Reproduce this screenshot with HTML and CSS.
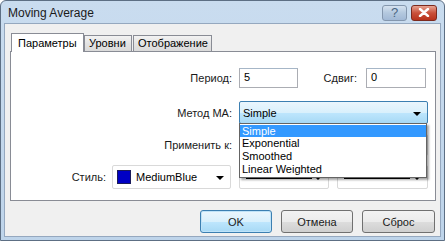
FILE: index.html
```html
<!DOCTYPE html>
<html lang="ru">
<head>
  <meta charset="UTF-8">
  <title>Moving Average</title>
  <link rel="stylesheet" href="styles.css">
</head>
<body>
  <div class="window">
    <div class="titlebar">
      <span class="title">Moving Average</span>
      <div class="caption-btns">
        <span class="cap-btn help">?</span>
        <span class="cap-btn close">
          <svg width="12" height="9" viewBox="0 0 12 9"><path d="M2 1 L10 8 M10 1 L2 8" stroke="#fff" stroke-width="2.4" stroke-linecap="round"/></svg>
        </span>
      </div>
    </div>

    <div class="client">
      <ul class="tabs">
        <li class="tab active">Параметры</li>
        <li class="tab">Уровни</li>
        <li class="tab">Отображение</li>
      </ul>

      <div class="panel">
        <div class="row row-period">
          <label class="lbl lbl-wide">Период:</label>
          <div class="edit edit-period">5</div>
          <label class="lbl lbl-shift">Сдвиг:</label>
          <div class="edit edit-shift">0</div>
        </div>

        <div class="row row-method">
          <label class="lbl lbl-wide">Метод МА:</label>
          <div class="combo combo-wide focused">
            <span>Simple</span>
            <i class="arrow"></i>
            <ul class="droplist">
              <li class="selected">Simple</li>
              <li>Exponential</li>
              <li>Smoothed</li>
              <li>Linear Weighted</li>
            </ul>
          </div>
        </div>

        <div class="row row-apply">
          <label class="lbl lbl-wide">Применить к:</label>
          <div class="combo combo-wide"><i class="arrow"></i></div>
        </div>

        <div class="row row-style">
          <label class="lbl lbl-style">Стиль:</label>
          <div class="combo combo-color">
            <span class="swatch"></span>
            <span>MediumBlue</span>
            <i class="arrow"></i>
          </div>
          <div class="combo combo-line"><span class="line"></span><i class="arrow"></i></div>
          <div class="combo combo-line last"><span class="line"></span><i class="arrow"></i></div>
        </div>
      </div>

      <div class="buttons">
        <button class="btn default">OK</button>
        <button class="btn">Отмена</button>
        <button class="btn">Сброс</button>
      </div>
    </div>
  </div>
</body>
</html>
```

FILE: styles.css
```css
* { margin: 0; padding: 0; box-sizing: border-box; }
body {
  width: 445px;
  height: 241px;
  overflow: hidden;
  font-family: "Liberation Sans", Arial, sans-serif;
  font-size: 11px;
  color: #000;
}

.window {
  width: 445px;
  height: 241px;
  background: linear-gradient(#c9dcef, #bed4ea);
  border: 1px solid #5d6f84;
  border-radius: 6px 6px 0 0;
  padding: 0 3px 3px 3px;
  display: flex;
  flex-direction: column;
}

/* title bar */
.titlebar {
  height: 22px;
  display: flex;
  align-items: center;
  justify-content: space-between;
  padding-left: 4px;
}
.title { font-size: 12px; color: #1a1a1a; margin-top: 1px; }
.caption-btns { display: flex; gap: 4px; margin-right: 4px; margin-top: 1px; }
.cap-btn {
  width: 26px;
  height: 16px;
  border-radius: 3px;
  display: flex;
  align-items: center;
  justify-content: center;
}
.help {
  width: 25px;
  background: linear-gradient(#d5e2f0, #b3c8de 50%, #a2b9d6);
  border: 1px solid #8497ae;
  color: #4a6683;
  font-size: 13px;
}
.close {
  background: linear-gradient(#e8a493, #c9503a 50%, #b8321c);
  border: 1px solid #7c2a1e;
}

/* client area */
.client {
  flex: 1;
  background: #f0f0f0;
  border: 1px solid #95a8bf;
  padding: 8px 5px 0 5px;
}

.tabs { list-style: none; display: flex; align-items: flex-end; height: 19px; padding-left: 1px; }
.tab {
  height: 16px;
  padding: 0 4px;
  line-height: 15px;
  border: 1px solid #898c95;
  border-bottom: none;
  margin-right: 1px;
  background: linear-gradient(#f3f3f3, #e3e3e3 50%, #dadada);
}
.tab.active {
  height: 19px;
  width: 73px;
  padding-left: 6px;
  line-height: 18px;
  background: #fff;
  position: relative;
  margin-right: 0;
  bottom: -1px;
}
.tab:nth-child(2) { width: 48px; }
.tab:nth-child(3) { width: 79px; }

.panel {
  height: 150px;
  width: 426px;
  border: 1px solid #898c95;
  background: #fff;
  padding-top: 16px;
}

.row { display: flex; align-items: center; }
.row-period { height: 20px; }
.row-method { height: 23px; margin-top: 13px; }
.row-apply { height: 22px; margin-top: 10px; }
.row-style { height: 24px; margin-top: 9px; }

.lbl { text-align: right; color: #1a1a1a; }
.lbl-wide { width: 221px; margin-right: 7px; }
.lbl-shift { width: 59px; margin-right: 9px; }
.lbl-style { width: 95px; margin-right: 6px; }

.edit {
  height: 20px;
  border: 1px solid #abadb3;
  border-top-color: #a6b6c7;
  background: #fff;
  padding-left: 4px;
  line-height: 17px;
}
.edit-period { width: 59px; }
.edit-shift { width: 60px; }

.combo {
  position: relative;
  height: 100%;
  border: 1px solid #d9d9d9;
  border-radius: 2px;
  background: #fff;
  display: flex;
  align-items: center;
  padding-left: 4px;
}
.combo-wide { width: 189px; }
.combo.focused {
  border-color: #3c7fb1;
  background: linear-gradient(#eaf6fd, #d9f0fc 50%, #bee6fd 51%, #a7d9f5);
  padding-left: 3px;
}
.arrow {
  position: absolute;
  right: 6px;
  top: 50%;
  margin-top: -1px;
  border-left: 4px solid transparent;
  border-right: 4px solid transparent;
  border-top: 4px solid #000;
}
.combo-color { width: 119px; margin-right: 8px; padding-left: 4px; gap: 5px; }
.swatch {
  width: 14px;
  height: 14px;
  background: #0000c4;
  border: 1px solid #1b1b5a;
}
.combo-line { width: 90px; margin-right: 8px; padding-left: 6px; }
.combo-line.last { width: 91px; margin-right: 0; }
.line {
  display: block;
  width: 66px;
  height: 2px;
  margin-top: 1px;
  background: #000;
}

/* opened drop-down list */
.droplist {
  position: absolute;
  list-style: none;
  top: 21px;
  left: -1px;
  width: 188px;
  background: #fff;
  border: 1px solid #646464;
  padding: 1px 0 1px 0;
  box-shadow: 2px 2px 2px rgba(0, 0, 0, 0.35);
  z-index: 5;
}
.droplist li { height: 13px; line-height: 12px; padding-left: 2px; }
.droplist li.selected { background: #3399ff; color: #fff; height: 12px; }

/* bottom buttons */
.buttons { display: flex; justify-content: flex-end; gap: 9px; margin-top: 9px; }
.btn {
  width: 72px;
  height: 23px;
  font: inherit;
  color: #1a1a1a;
  border: 1px solid #707070;
  border-radius: 3px;
  background: linear-gradient(#f2f2f2, #ebebeb 50%, #dddddd 51%, #cfcfcf);
}
.btn:last-child { width: 73px; }
.btn.default {
  border-color: #3c7fb1;
  background: linear-gradient(#eaf6fd, #d9f0fc 50%, #bee6fd 51%, #a7d9f5);
  box-shadow: inset 0 0 0 1px #bfe3f8;
}
```
